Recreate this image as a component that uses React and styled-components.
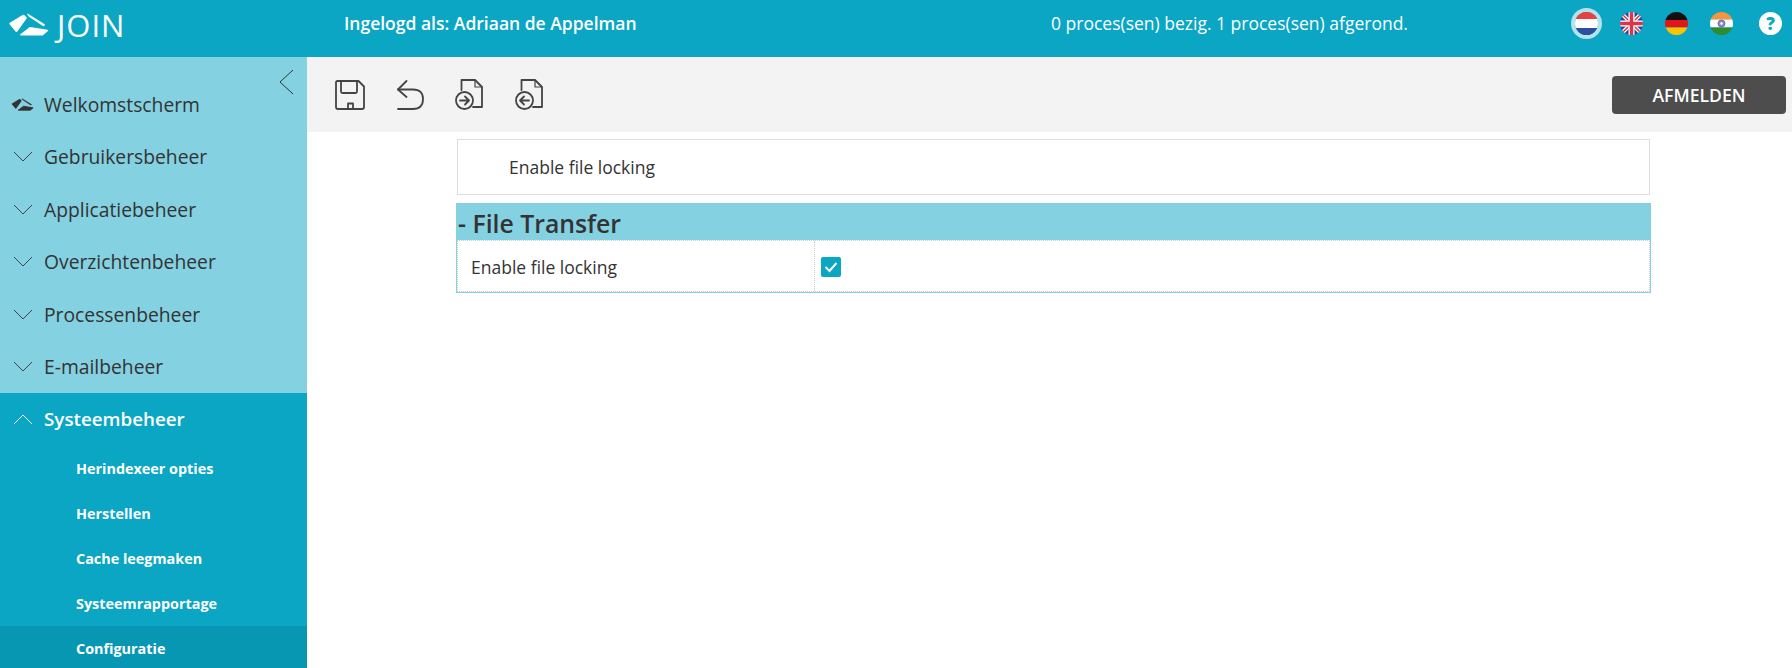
import React from 'react'
import styled, { createGlobalStyle } from 'styled-components'

const GlobalStyle = createGlobalStyle`
  html, body {
    margin: 0;
    height: 100%;
    overflow: hidden;
    background: #fff;
    font-family: "Open Sans", "Liberation Sans", sans-serif;
    color: #333;
  }
`

const Page = styled.div`
  display: flex;
  flex-direction: column;
  height: 668px;
  overflow: hidden;
`

const Header = styled.header`
  display: flex;
  align-items: center;
  flex: 0 0 57px;
  background: #0aa6c4;
  color: #fff;
`

const Brand = styled.div`
  display: flex;
  align-items: center;
  gap: 8px;
  width: 344px;
  padding-left: 8px;
  box-sizing: border-box;
  font-size: 31px;
  font-weight: 500;
  line-height: 40px;
  letter-spacing: 1px;
  margin-top: -7px;
`

const LogoMark = styled.span`
  display: flex;
  margin-top: ${(p) => p.$lift || 0}px;
  margin-left: ${(p) => p.$shift || 0}px;
`

const UserName = styled.div`
  width: 707px;
  font-size: 17.5px;
  font-weight: 600;
  margin-top: -11px;
`

const Status = styled.div`
  font-size: 17.5px;
  margin-top: -11px;
`

const FlagRow = styled.div`
  display: flex;
  align-items: center;
  margin-left: auto;
  margin-top: -11px;
`

const FlagSlot = styled.div`
  display: flex;
  align-items: center;
  justify-content: center;
  width: 45px;
  height: 30px;
`

const Flag = styled.div`
  width: 23px;
  height: 23px;
  border-radius: 50%;
  overflow: hidden;
  box-shadow: ${(p) => (p.$active ? '0 0 0 4px #b5e3ec' : 'none')};
  svg { display: block; }
`

const Help = styled.div`
  display: flex;
  align-items: center;
  justify-content: center;
  width: 23px;
  height: 23px;
  margin: -11px 10px 0 15px;
  border-radius: 50%;
  background: #fff;
  color: #0aa6c4;
  font-size: 17px;
  font-weight: 800;
`

const Body = styled.div`
  display: flex;
  flex: 1;
  min-height: 0;
`

const Sidebar = styled.nav`
  position: relative;
  flex: 0 0 307px;
  padding-top: 21px;
  background: #84d1e2;
`

const Collapse = styled.svg`
  position: absolute;
  top: 12px;
  right: 13px;
`

const NavItem = styled.div`
  display: flex;
  align-items: center;
  height: 52.5px;
  padding-left: 13px;
  background: ${(p) => (p.$open ? '#0aa6c4' : 'transparent')};
  color: ${(p) => (p.$open ? '#fff' : '#333')};
  font-size: ${(p) => (p.$open ? 18.8 : 19.3)}px;
  font-weight: ${(p) => (p.$open ? 600 : 500)};
`

const NavIcon = styled.span`
  display: flex;
  align-items: center;
  width: 31px;
`

const SubList = styled.div`
  background: #0aa6c4;
  padding-bottom: 20px;
`

const SubItem = styled.div`
  display: flex;
  align-items: center;
  height: 45px;
  padding-left: 76px;
  background: ${(p) => (p.$active ? '#0897b3' : 'transparent')};
  color: #fff;
  font-size: 14.4px;
  font-weight: 700;
`

const Main = styled.main`
  flex: 1;
  min-width: 0;
`

const Toolbar = styled.div`
  display: flex;
  align-items: center;
  height: 75px;
  padding: 0 6px 0 28px;
  background: #f3f3f3;
`

const ToolButton = styled.span`
  display: flex;
  align-items: center;
  justify-content: center;
  width: ${(p) => p.$w}px;
  margin-right: ${(p) => p.$gap}px;
`

const LogoutButton = styled.button`
  width: 174px;
  height: 38px;
  margin-left: auto;
  border: none;
  border-radius: 4px;
  background: #4d4d4d;
  color: #fff;
  font-family: inherit;
  font-size: 17.6px;
  font-weight: 600;
`

const Content = styled.div`
  padding: 7px 141px 0 149px;
`

const SearchBox = styled.div`
  display: flex;
  align-items: center;
  height: 54px;
  margin: 0 1px 8px;
  padding-left: 51px;
  border: 1px solid #ddd;
  font-size: 17.5px;
`

const Section = styled.section`
  border: 1px solid #84d1e2;
  border-top: none;
`

const SectionTitle = styled.h2`
  margin: 0 -1px;
  height: 37px;
  padding-left: 2px;
  background: #84d1e2;
  font-size: 24.8px;
  font-weight: 600;
  line-height: 41px;
  color: #333;
`

const Row = styled.div`
  display: grid;
  grid-template-columns: 357px 1fr;
  height: 50px;
  border: 1px dotted #ccc;
  font-size: 17.5px;
`

const LabelCell = styled.div`
  display: flex;
  align-items: center;
  padding: 2px 0 0 13px;
  border-right: 1px dotted #ccc;
`

const ValueCell = styled.div`
  display: flex;
  align-items: center;
  padding: 2px 0 0 6px;
`

const CheckBox = styled.span`
  display: flex;
  align-items: center;
  justify-content: center;
  width: 20px;
  height: 20px;
  border-radius: 2px;
  background: #0aa6c4;
`

const Logo = ({ size = 41, color = '#fff' }) => (
  <svg width={size} height={(size * 23) / 41} viewBox="0 0 41 23" fill={color} stroke={color} strokeLinejoin="round">
    <path d="M2.300 10.700 L15.500 2.700 L17.800 5 L8.500 18 Z" strokeWidth="2" />
    <path d="M19.500 0.800 L37 11.700 L35.300 13 L20.300 3 Z" strokeWidth="0.500" />
    <path d="M12.800 21.800 L22.300 14.700 L39.500 17.500 L34.500 21.800 Z" strokeWidth="1.500" />
  </svg>
)

const Chevron = ({ up, color }) => (
  <svg width="20" height="11" viewBox="0 0 20 11" fill="none" stroke={color} strokeWidth="1">
    <path d={up ? 'M1 10 L10 1 L19 10' : 'M1 1 L10 10 L19 1'} />
  </svg>
)

const IconStroke = { fill: 'none', stroke: '#444', strokeWidth: 1.8, strokeLinejoin: 'round', strokeLinecap: 'round' }

const SaveIcon = () => (
  <svg width="30" height="30" viewBox="0 0 30 30" {...IconStroke}>
    <path d="M2.500 1 H23.500 L29 6.500 V27 Q29 29 27 29 H3 Q1 29 1 27 V2.500 Q1 1 2.500 1 Z" />
    <path d="M6 1 V11.500 Q6 13 7.500 13 H20.500 Q22 13 22 11.500 V1" />
    <path d="M13 29 V23.500 H18 V29" />
  </svg>
)

const UndoIcon = () => (
  <svg width="27" height="30" viewBox="0 0 27 30" {...IconStroke}>
    <path d="M9.500 1 L1 9.500 L9.500 17" />
    <path d="M1 9.500 H16 Q26 9.500 26 19 Q26 29 16 29 H1" />
  </svg>
)

const DocIcon = ({ left }) => (
  <svg width="28" height="31" viewBox="0 0 28 31" {...IconStroke}>
    <path d="M6.500 11 V1 H20 L27 8 V28 H18" />
    <path d="M20 1 V8 H27" strokeWidth="1.200" />
    <circle cx="9.500" cy="21.500" r="8.500" />
    <path d={left ? 'M14 21.500 H5 M9 17.500 L5 21.500 L9 25.500' : 'M5 21.500 H14 M10 17.500 L14 21.500 L10 25.500'} />
  </svg>
)

const FlagNL = () => (
  <svg width="23" height="23" viewBox="0 0 23 23">
    <rect width="23" height="7" fill="#e8413f" />
    <rect y="7" width="23" height="9" fill="#fff" />
    <rect y="16" width="23" height="7" fill="#2c4f9e" />
  </svg>
)

const FlagUK = () => (
  <svg width="23" height="23" viewBox="0 0 23 23">
    <rect width="23" height="23" fill="#2a4a9c" />
    <path d="M0 0 L23 23 M23 0 L0 23" stroke="#fff" strokeWidth="4" />
    <path d="M0 0 L23 23 M23 0 L0 23" stroke="#d8344a" strokeWidth="1.500" />
    <path d="M11.500 0 V23 M0 11.500 H23" stroke="#fff" strokeWidth="6" />
    <path d="M11.500 0 V23 M0 11.500 H23" stroke="#d8344a" strokeWidth="3.500" />
  </svg>
)

const FlagDE = () => (
  <svg width="23" height="23" viewBox="0 0 23 23">
    <rect width="23" height="8" fill="#111" />
    <rect y="8" width="23" height="7.500" fill="#e0161c" />
    <rect y="15.500" width="23" height="7.500" fill="#fbc400" />
  </svg>
)

const FlagIN = () => (
  <svg width="23" height="23" viewBox="0 0 23 23">
    <rect width="23" height="7.500" fill="#f7953a" />
    <rect y="7.500" width="23" height="8" fill="#fff" />
    <rect y="15.500" width="23" height="7.500" fill="#2e8b2e" />
    <circle cx="11.500" cy="11.500" r="3.500" fill="#8f8fc8" stroke="#5d5da8" strokeWidth="0.800" />
    <circle cx="11.500" cy="11.500" r="1.200" fill="#fff" />
  </svg>
)

const menu = ['Gebruikersbeheer', 'Applicatiebeheer', 'Overzichtenbeheer', 'Processenbeheer', 'E-mailbeheer']
const subMenu = ['Herindexeer opties', 'Herstellen', 'Cache leegmaken', 'Systeemrapportage', 'Configuratie']

export default function App() {
  return (
    <Page>
      <GlobalStyle />
      <Header>
        <Brand>
          <LogoMark $lift={-1}><Logo /></LogoMark>
          <span>JOIN</span>
        </Brand>
        <UserName>Ingelogd als: Adriaan de Appelman</UserName>
        <Status>0 proces(sen) bezig. 1 proces(sen) afgerond.</Status>
        <FlagRow>
          <FlagSlot><Flag $active><FlagNL /></Flag></FlagSlot>
          <FlagSlot><Flag><FlagUK /></Flag></FlagSlot>
          <FlagSlot><Flag><FlagDE /></Flag></FlagSlot>
          <FlagSlot><Flag><FlagIN /></Flag></FlagSlot>
        </FlagRow>
        <Help>?</Help>
      </Header>
      <Body>
        <Sidebar>
          <Collapse width="15" height="26" viewBox="0 0 15 26" fill="none" stroke="#333" strokeWidth="1">
            <path d="M14 1 L1 13 L14 25" />
          </Collapse>
          <NavItem>
            <NavIcon><LogoMark $shift={-2}><Logo size={23} color="#333" /></LogoMark></NavIcon>
            Welkomstscherm
          </NavItem>
          {menu.map((label) => (
            <NavItem key={label}>
              <NavIcon><Chevron color="#444" /></NavIcon>
              {label}
            </NavItem>
          ))}
          <NavItem $open>
            <NavIcon><Chevron up color="#fff" /></NavIcon>
            Systeembeheer
          </NavItem>
          <SubList>
            {subMenu.map((label) => (
              <SubItem key={label} $active={label === 'Configuratie'}>{label}</SubItem>
            ))}
          </SubList>
        </Sidebar>
        <Main>
          <Toolbar>
            <ToolButton $w={30} $gap={32}><SaveIcon /></ToolButton>
            <ToolButton $w={27} $gap={31}><UndoIcon /></ToolButton>
            <ToolButton $w={28} $gap={32}><DocIcon /></ToolButton>
            <ToolButton $w={28} $gap={0}><DocIcon left /></ToolButton>
            <LogoutButton>AFMELDEN</LogoutButton>
          </Toolbar>
          <Content>
            <SearchBox>Enable file locking</SearchBox>
            <Section>
              <SectionTitle>- File Transfer</SectionTitle>
              <Row>
                <LabelCell>Enable file locking</LabelCell>
                <ValueCell>
                  <CheckBox>
                    <svg width="14" height="12" viewBox="0 0 14 12" fill="none" stroke="#fff" strokeWidth="2">
                      <path d="M1.500 6 L5.500 10 L12.500 2" />
                    </svg>
                  </CheckBox>
                </ValueCell>
              </Row>
            </Section>
          </Content>
        </Main>
      </Body>
    </Page>
  )
}
